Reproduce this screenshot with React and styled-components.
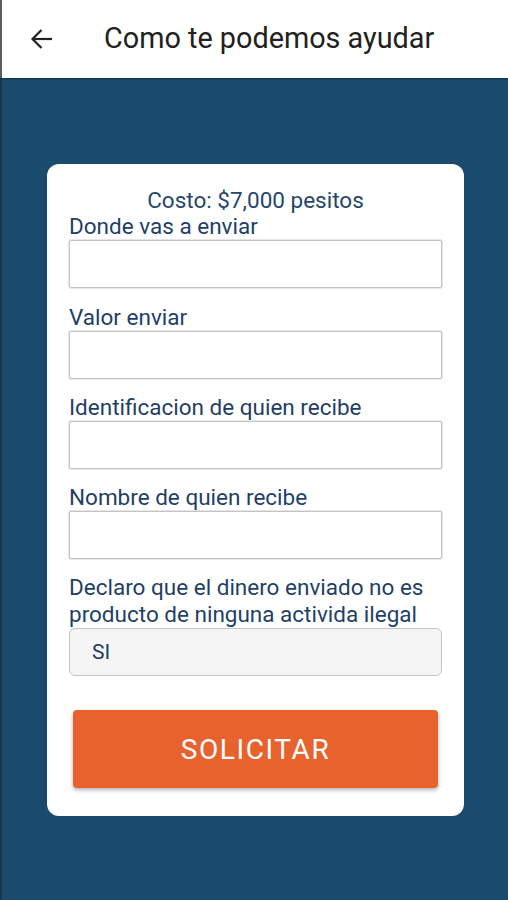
import React from 'react';
import styled, { createGlobalStyle } from 'styled-components';

const GlobalStyle = createGlobalStyle`
  html, body {
    margin: 0;
    padding: 0;
    background: #1a4a6c;
  }
  body {
    font-family: Roboto, 'Noto Sans', sans-serif;
  }
`;

const Page = styled.div`
  display: flex;
  flex-direction: column;
  width: 508px;
  min-height: 900px;
  background: #1a4a6c;
`;

const Header = styled.header`
  display: flex;
  align-items: center;
  height: 78px;
  background: #ffffff;
  border-left: 2px solid #5c5c5c;
  box-shadow: 0 1px 2px rgba(0, 0, 0, 0.35);
  position: relative;
  z-index: 1;
`;

const BackButton = styled.button`
  display: flex;
  align-items: center;
  justify-content: center;
  margin-left: 27px;
  padding: 0;
  width: 24px;
  height: 24px;
  border: none;
  background: none;
  color: #212121;
`;

const Title = styled.h1`
  margin: 0 0 2px 51px;
  font-size: 28.8px;
  font-weight: 400;
  color: #212121;
`;

const Main = styled.main`
  flex: 1;
  border-left: 2px solid #15384f;
  padding: 86px 0 40px 45px;
`;

const Card = styled.form`
  display: flex;
  flex-direction: column;
  width: 373px;
  padding: 25px 22px 28px;
  background: #ffffff;
  border-radius: 12px;
`;

const Cost = styled.p`
  margin: 0;
  text-align: center;
  font-size: 22.5px;
  line-height: 23px;
  color: #26466b;
`;

const Field = styled.div`
  display: flex;
  flex-direction: column;
  margin-top: ${(p) => p.$gap}px;
`;

const Label = styled.label`
  padding-top: ${(p) => (p.$multi ? '0' : '2px')};
  font-size: 22.5px;
  line-height: ${(p) => (p.$multi ? '27px' : '24px')};
  color: #1f3f66;
`;

const Input = styled.input`
  box-sizing: border-box;
  height: 48px;
  margin: 2px 0 0;
  border: 1px solid #c4c4c4;
  border-radius: 2px;
  box-shadow: 0 0 0 1px #e6e6e6;
  background: #ffffff;
  outline: none;
`;

const Select = styled.div`
  display: flex;
  align-items: center;
  box-sizing: border-box;
  height: 48px;
  padding-left: 22px;
  border: 1px solid #c4c4c4;
  border-radius: 6px;
  background: #f5f5f5;
  font-size: 21px;
  color: #243d5e;
`;

const Submit = styled.button`
  margin: 34px 4px 0;
  height: 78px;
  border: none;
  border-radius: 4px;
  background: #e8622d;
  box-shadow: 0 2px 4px rgba(0, 0, 0, 0.3);
  color: #ffffff;
  font-family: Roboto, sans-serif;
  font-size: 28px;
  font-weight: 400;
  letter-spacing: 1.6px;
`;

const ArrowLeft = () => (
  <svg width="23" height="22" viewBox="0 0 23 22" fill="none" stroke="currentColor" strokeWidth="2.2">
    <path d="M22 11H2.5" />
    <path d="M11.5 2L2.5 11l9 9" />
  </svg>
);

const fields = [
  { label: 'Donde vas a enviar', gap: 0 },
  { label: 'Valor enviar', gap: 15 },
  { label: 'Identificacion de quien recibe', gap: 14 },
  { label: 'Nombre de quien recibe', gap: 14 },
];

const App = () => (
  <Page>
    <GlobalStyle />
    <Header>
      <BackButton aria-label="Volver">
        <ArrowLeft />
      </BackButton>
      <Title>Como te podemos ayudar</Title>
    </Header>
    <Main>
      <Card onSubmit={(e) => e.preventDefault()}>
        <Cost>Costo: $7,000 pesitos</Cost>
        {fields.map((f) => (
          <Field key={f.label} $gap={f.gap}>
            <Label>{f.label}</Label>
            <Input />
          </Field>
        ))}
        <Field $gap={15}>
          <Label $multi>Declaro que el dinero enviado no es producto de ninguna activida ilegal</Label>
          <Select>SI</Select>
        </Field>
        <Submit type="submit">SOLICITAR</Submit>
      </Card>
    </Main>
  </Page>
);

export default App;
